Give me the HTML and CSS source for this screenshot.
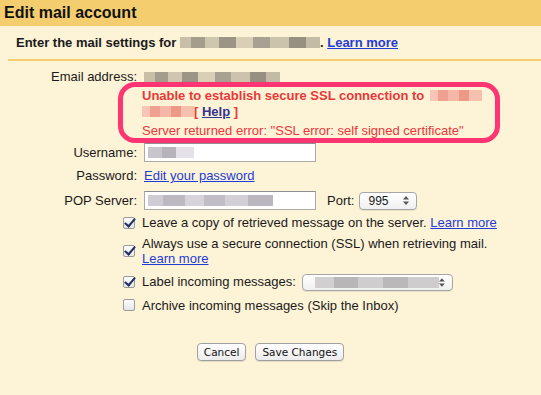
FILE: index.html
```html
<!DOCTYPE html>
<html lang="en">
<head>
  <meta charset="UTF-8">
  <title>Edit mail account</title>
  <link rel="stylesheet" href="styles.css">
</head>
<body>
  <header>
    <span class="title">Edit mail account</span>
  </header>
  <div class="intro">
    Enter the mail settings for <span class="blur blur-intro"></span>. <a href="#">Learn more</a>
  </div>
  <div class="rule"></div>

  <form class="settings">
    <div class="row">
      <span class="label">Email address:</span>
      <span class="blur blur-email"></span>
    </div>

    <div class="error">
      <div class="ring"></div>
      <div class="err-strong">Unable to establish secure SSL connection to <span class="blur blur-pink blur-host1"></span></div>
      <div class="err-strong"><span class="blur blur-pink blur-host2"></span>[ <a href="#" class="help">Help</a> ]</div>
      <div class="err-detail">Server returned error: "SSL error: self signed certificate"</div>
    </div>

    <div class="row row-user">
      <span class="label">Username:</span>
      <span class="field"><span class="blur blur-user"></span></span>
    </div>
    <div class="row row-pass">
      <span class="label">Password:</span>
      <a href="#">Edit your password</a>
    </div>
    <div class="row row-pop">
      <span class="label">POP Server:</span>
      <span class="field"><span class="blur blur-server"></span></span>
      <span class="port-label">Port:</span>
      <span class="select select-port">995
        <svg class="arrows" width="6" height="9" viewBox="0 0 6 9"><path d="M3 0 L6 3.5 H0 Z M3 9 L6 5.5 H0 Z" fill="#555"/></svg>
      </span>
    </div>

    <div class="check-row cr1">
      <span class="box"><span class="cb on"></span></span>
      <span class="check-text">Leave a copy of retrieved message on the server. <a href="#">Learn more</a></span>
    </div>
    <div class="check-row cr2">
      <span class="box"><span class="cb on"></span></span>
      <span class="check-text">Always use a secure connection (SSL) when retrieving mail. <a href="#">Learn more</a></span>
    </div>
    <div class="check-row cr3">
      <span class="box"><span class="cb on"></span></span>
      <span class="check-text">Label incoming messages:</span>
      <span class="select select-label"><span class="blur blur-labelsel"></span>
        <svg class="arrows" width="6" height="9" viewBox="0 0 6 9"><path d="M3 0 L6 3.5 H0 Z M3 9 L6 5.5 H0 Z" fill="#555"/></svg>
      </span>
    </div>
    <div class="check-row cr4">
      <span class="box"><span class="cb"></span></span>
      <span class="check-text">Archive incoming messages (Skip the Inbox)</span>
    </div>

    <div class="buttons">
      <button type="button">Cancel</button>
      <button type="button">Save Changes</button>
    </div>
  </form>
</body>
</html>
```

FILE: styles.css
```css
/* Page */
body {
  margin: 0;
  width: 541px;
  height: 395px;
  overflow: hidden;
  background: #fdf3d7;
  color: #1a1a1a;
  font-family: "Liberation Sans", Arial, sans-serif;
  font-size: 13px;
}
a {
  color: #1f3bd8;
  text-decoration: underline;
}
header {
  height: 26px;
  background: #f4cd6e;
  padding-left: 4px;
}
.title {
  font-size: 16px;
  font-weight: bold;
  line-height: 25px;
  color: #111;
}
.intro {
  padding: 9px 0 8px 16px;
  line-height: 16px;
  font-weight: bold;
}
.rule {
  margin-left: 8px;
  border-top: 2px solid #f4cd6e;
}

/* Blurred (redacted) text */
.blur {
  display: inline-block;
  height: 11px;
  vertical-align: -1px;
  background: linear-gradient(90deg, #c9bfa8 0 8%, #a59d8c 8% 18%, #cfc6b0 18% 28%, #9c9585 28% 40%, #d8cfb6 40% 52%, #a8a090 52% 64%, #ccc3ad 64% 78%, #979080 78% 90%, #c4bba6 90% 100%);
}
.blur-intro { width: 140px; }
.blur-email { width: 136px; margin-left: 0; }
.blur-pink {
  background: linear-gradient(90deg, #f7c6b6 0 15%, #f0a090 15% 35%, #f6b8a6 35% 55%, #ee9888 55% 75%, #f5c0ae 75% 100%);
}
.blur-host1 { width: 52px; margin-left: 2px; }
.blur-host2 { width: 52px; }
.blur-user {
  width: 46px;
  background: linear-gradient(90deg, #c8c5cc 0 30%, #b6b3bb 30% 60%, #e4e2e8 60% 100%);
}
.blur-server {
  width: 125px;
  background: linear-gradient(90deg, #cfccd4 0 12%, #bcb9c2 12% 30%, #d6d3da 30% 45%, #c0bdc6 45% 62%, #d2cfd6 62% 80%, #bab7c0 80% 100%);
}
.blur-labelsel {
  width: 128px;
  background: linear-gradient(90deg, #d2cfd0 0 15%, #b9b6b8 15% 35%, #d0cdce 35% 55%, #bbb8ba 55% 75%, #cfcccd 75% 100%);
}

/* Form rows */
.settings {
  margin: 0;
  padding-top: 8px;
}
.row {
  display: flex;
  align-items: center;
  line-height: 16px;
}
.label {
  width: 144px;
  padding-right: 7px;
  text-align: right;
  box-sizing: border-box;
  flex-shrink: 0;
}
.row-user { margin-top: 4px; }
.row-pass { margin-top: 6px; }
.row-pop { margin-top: 7px; }
.field {
  display: flex;
  align-items: center;
  width: 172px;
  height: 19px;
  box-sizing: border-box;
  padding-left: 3px;
  background: #fff;
  border: 1px solid #a9a9a9;
  border-top-color: #8f8f8f;
  flex-shrink: 0;
}
.port-label {
  margin: 0 5px 0 11px;
}
.select {
  display: flex;
  align-items: center;
  justify-content: space-between;
  box-sizing: border-box;
  height: 18px;
  padding: 0 7px 0 8px;
  border: 1px solid #a6a6a6;
  border-radius: 4px;
  background: linear-gradient(#ffffff, #f0f0f0);
  font-size: 12px;
  box-shadow: 0 1px 0 rgba(0, 0, 0, 0.08);
  flex-shrink: 0;
}
.select-port { width: 58px; }
.select-label {
  width: 151px;
  height: 17px;
  margin-left: 6px;
  padding-left: 12px;
}

/* Error message */
.error {
  position: relative;
  margin: 3px 0 0 142px;
  color: #e8383a;
}
.err-strong {
  font-weight: bold;
  line-height: 16px;
}
.err-detail {
  margin-top: 3px;
  line-height: 16px;
}
.help {
  color: #35358f;
}
.ring {
  position: absolute;
  left: -24px;
  top: -6px;
  width: 382px;
  height: 61px;
  box-sizing: border-box;
  border: 5px solid #ff3473;
  border-radius: 17px;
}

/* Checkboxes */
.check-row {
  display: flex;
  align-items: center;
  line-height: 15.5px;
}
.box {
  width: 142px;
  display: flex;
  justify-content: flex-end;
  padding-right: 7px;
  box-sizing: border-box;
  flex-shrink: 0;
}
.cb {
  position: relative;
  width: 12px;
  height: 12px;
  box-sizing: border-box;
  border: 1px solid #9a9a9a;
  border-radius: 2px;
  background: linear-gradient(#fdfdfd, #e6e6e6);
}
.cb.on::after {
  content: "";
  position: absolute;
  left: 3px;
  top: -2px;
  width: 4px;
  height: 9px;
  border-right: 2.5px solid #1f2f63;
  border-bottom: 2.5px solid #1f2f63;
  transform: rotate(40deg);
}
.check-text {
  max-width: 370px;
}
.cr1 { margin-top: 5px; }
.cr2 { margin-top: 5px; }
.cr3 { margin-top: 7px; }
.cr4 { margin-top: 7px; }

/* Buttons */
.buttons {
  display: flex;
  justify-content: center;
  gap: 9px;
  margin-top: 30px;
}
.buttons button {
  height: 18px;
  padding: 0 6px;
  font-family: "DejaVu Sans", sans-serif;
  font-size: 10.5px;
  color: #111;
  background: linear-gradient(#ffffff, #ececec);
  border: 1px solid #a0a0a0;
  border-radius: 4px;
  box-shadow: 0 1px 0 rgba(0, 0, 0, 0.1);
}
```
